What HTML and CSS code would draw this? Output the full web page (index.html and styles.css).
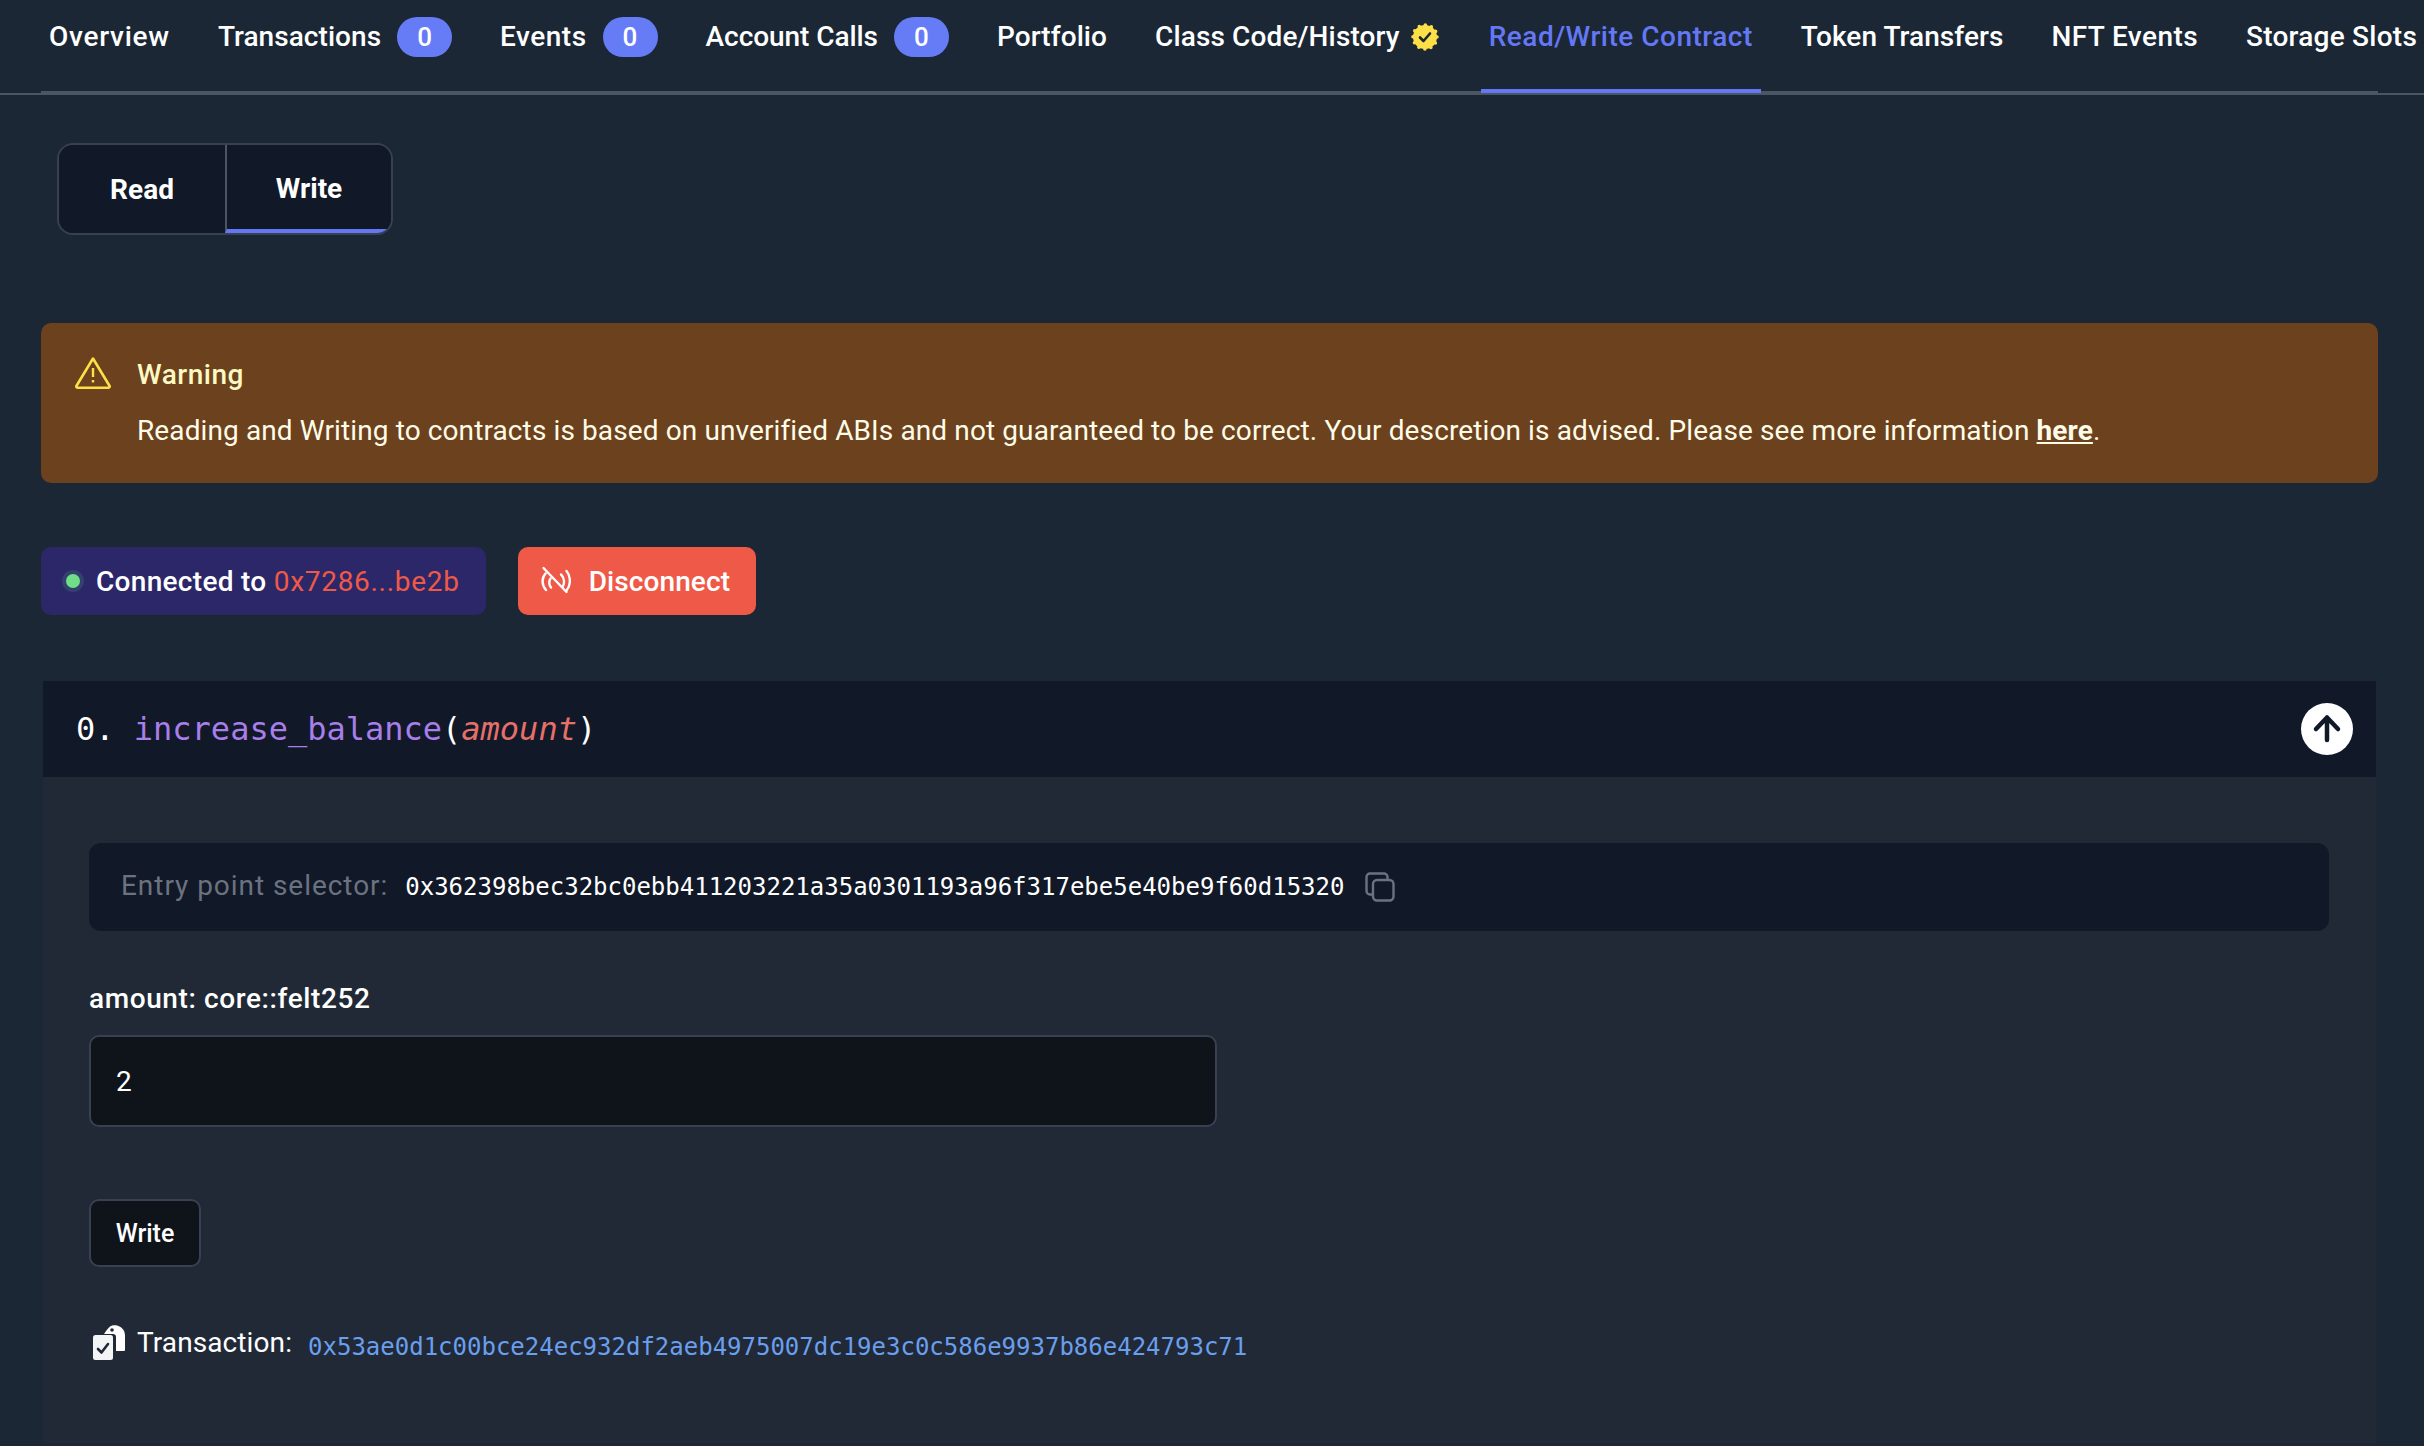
FILE: index.html
```html
<!DOCTYPE html>
<html lang="en">
<head>
  <meta charset="UTF-8">
  <title>Read/Write Contract</title>
  <link rel="stylesheet" href="styles.css">
</head>
<body>
  <nav class="tabs">
    <div class="tab-list">
      <a class="tab tab-overview">Overview</a>
      <a class="tab tab-tx">Transactions <span class="badge">0</span></a>
      <a class="tab tab-events">Events <span class="badge">0</span></a>
      <a class="tab tab-calls">Account Calls <span class="badge">0</span></a>
      <a class="tab tab-portfolio">Portfolio</a>
      <a class="tab tab-class">Class Code/History
        <svg class="verified" viewBox="0 0 28 28">
          <circle cx="14" cy="14" r="12" fill="#fde047" stroke="#fde047" stroke-width="3.600" stroke-linecap="round" stroke-dasharray="0 6.283"/>
          <path fill="none" stroke="#1b2735" stroke-width="2.600" stroke-linecap="round" stroke-linejoin="round" d="M9 14.500l3.500 3.500 6.500-7.500"/>
        </svg>
      </a>
      <a class="tab tab-rw active">Read/Write Contract</a>
      <a class="tab tab-token">Token Transfers</a>
      <a class="tab tab-nft">NFT Events</a>
      <a class="tab">Storage Slots</a>
    </div>
  </nav>

  <main class="content">
    <div class="segment">
      <button class="segment-btn">Read</button>
      <button class="segment-btn selected">Write</button>
    </div>

    <div class="warning">
      <svg class="warning-icon" viewBox="0 0 36 32">
        <path fill="none" stroke="#fde047" stroke-width="2.600" stroke-linejoin="round" d="M18 1.500L34.600 29a1.200 1.200 0 0 1-1 1.700H2.400a1.200 1.200 0 0 1-1-1.700z"/>
        <path stroke="#fde047" stroke-width="2.400" d="M18 11v9M18 23v2.600"/>
      </svg>
      <div>
        <div class="warning-title">Warning</div>
        <p class="warning-text">Reading and Writing to contracts is based on unverified ABIs and not guaranteed to be correct. Your descretion is advised. Please see more information <a class="warning-link">here</a>.</p>
      </div>
    </div>

    <div class="wallet">
      <div class="connected">
        <span class="dot"></span>
        <span>Connected to <span class="address">0x7286...be2b</span></span>
      </div>
      <button class="disconnect">
        <svg class="disconnect-icon" viewBox="0 0 30 30">
          <g fill="none" stroke="#fff" stroke-width="2.400" stroke-linecap="round">
            <path d="M4.500 7.500C.5 12 .5 19 5 24M25.500 5c4.500 5.500 4.500 14 0 19.500"/>
            <path d="M9.500 12.500C7.500 15 8 19 10 21.500M20 8.500c3.500 3 4 9 1.500 12.500"/>
            <path d="M2.500 2L25.500 26"/>
          </g>
        </svg>
        Disconnect
      </button>
    </div>

    <section class="fn-card">
      <header class="fn-header">
        <div class="fn-title">0. <span class="fn-name">increase_balance</span>(<em class="fn-arg">amount</em>)</div>
        <button class="collapse">
          <svg viewBox="0 0 52 52" class="collapse-icon">
            <path fill="none" stroke="#111827" stroke-width="4.500" stroke-linecap="round" stroke-linejoin="round" d="M26 37V14.500M15 26L26 14.500 37 26"/>
          </svg>
        </button>
      </header>
      <div class="fn-body">
        <div class="selector">
          <span class="selector-label">Entry point selector:</span>
          <code class="selector-value">0x362398bec32bc0ebb411203221a35a0301193a96f317ebe5e40be9f60d15320</code>
          <svg class="copy-icon" viewBox="0 0 30 30">
            <g fill="none" stroke="#6b7280" stroke-width="2.400">
              <path d="M7 22.500H5a3.500 3.500 0 0 1-3.500-3.500V5A3.500 3.500 0 0 1 5 1.500h14A3.500 3.500 0 0 1 22.500 5v2"/>
              <rect x="8" y="8" width="20.500" height="20.500" rx="4"/>
            </g>
          </svg>
        </div>
        <label class="field-label" for="amount">amount: core::felt252</label>
        <input class="field-input" id="amount" type="text" value="2">
        <button class="write-btn">Write</button>
        <div class="tx">
          <svg class="tx-icon" viewBox="0 0 32 35">
            <path fill="#fff" d="M11 9c2-3 4-6 6-7.500 2-1.500 5-1.500 7-1 4 1 8 4 8 10V25a1 1 0 0 1-1 1h-8V12a3 3 0 0 0-3-3z"/>
            <circle cx="19" cy="5" r="1.800" fill="#212936"/>
            <rect fill="#f3f4f6" x="0" y="10" width="20" height="25" rx="2.500"/>
            <path fill="none" stroke="#1f2937" stroke-width="2.600" stroke-linecap="round" stroke-linejoin="round" d="M5 24l3.500 3.500L15 19"/>
          </svg>
          <span class="tx-label">Transaction:</span>
          <a class="tx-hash">0x53ae0d1c00bce24ec932df2aeb4975007dc19e3c0c586e9937b86e424793c71</a>
        </div>
      </div>
    </section>
  </main>
</body>
</html>
```

FILE: styles.css
```css
html, body {
  height: 100%;
}
body {
  margin: 0;
  background-color: #1b2735;
  color: #fff;
  font-family: Roboto, "Noto Sans", Arial, sans-serif;
  font-size: 28px;
  overflow: hidden;
}
button {
  font-family: inherit;
  color: inherit;
}

/* tabs */
.tabs {
  border-bottom: 2px solid #4b5563;
}
.tab-list {
  display: flex;
  gap: 32px;
  height: 91px;
  margin: 0 46px 0 41px;
  border-bottom: 2px solid #4b5563;
}
.tab {
  display: flex;
  flex-shrink: 0;
  align-items: center;
  align-self: flex-start;
  gap: 16px;
  height: 40px;
  padding: 17px 8px 32px;
  border-bottom: 4px solid transparent;
  font-weight: 500;
  line-height: 40px;
  letter-spacing: 0.25px;
  white-space: nowrap;
}
.tab-overview { letter-spacing: 0.74px; }
.tab-tx { letter-spacing: 0.05px; }
.tab-events { letter-spacing: 0.5px; }
.tab-calls { letter-spacing: -0.07px; }
.tab-portfolio { letter-spacing: 0.08px; }
.tab-class { letter-spacing: 0.13px; }
.tab-rw { letter-spacing: 0.5px; }
.tab-token { letter-spacing: 0.06px; }
.tab-nft { letter-spacing: 0.41px; }
.tab.active {
  color: #6478f5;
  border-bottom-color: #6478f5;
}
.badge {
  display: inline-block;
  width: 55px;
  height: 40px;
  border-radius: 20px;
  background-color: #667cf7;
  font-size: 26px;
  text-align: center;
}
.verified {
  width: 28px;
  height: 28px;
  margin: 0 2px 0 -5px;
}

/* main */
.content {
  padding: 0 46px 0 41px;
}
.segment {
  display: flex;
  width: fit-content;
  height: 88px;
  margin: 48px 0 0 16px;
  border: 2px solid #374151;
  border-radius: 16px;
  overflow: hidden;
}
.segment-btn {
  width: 166px;
  border: 0;
  background-color: #111827;
  font-size: 28px;
  font-weight: 700;
}
.segment-btn.selected {
  padding-top: 4px;
  border-left: 2px solid #4b5563;
  border-bottom: 4px solid #6478f5;
}

/* warning */
.warning {
  display: flex;
  gap: 26px;
  height: 160px;
  margin-top: 88px;
  padding: 34px 34px 0;
  box-sizing: border-box;
  border-radius: 10px;
  background-color: #6c411d;
  color: #fefce8;
}
.warning-icon {
  width: 36px;
  height: 32px;
  flex-shrink: 0;
}
.warning-title {
  color: #fef9c3;
  font-weight: 500;
  line-height: 36px;
  letter-spacing: 0.5px;
}
.warning-text {
  margin: 20px 0 0;
  line-height: 36px;
  letter-spacing: 0.11px;
}
.warning-link {
  font-weight: 700;
  text-decoration: underline;
}

/* wallet */
.wallet {
  display: flex;
  gap: 32px;
  margin-top: 64px;
}
.connected {
  display: flex;
  align-items: center;
  gap: 16px;
  height: 68px;
  padding: 0 26px 0 25px;
  border-radius: 10px;
  background-color: #2c2768;
  font-weight: 500;
  letter-spacing: 0.3px;
}
.dot {
  width: 14px;
  height: 14px;
  border-radius: 50%;
  background-color: #6ee087;
  box-shadow: 0 0 0 4px #34406e;
}
.address {
  color: #ee5a47;
  font-weight: 400;
  letter-spacing: 0.7px;
}
.disconnect {
  display: flex;
  align-items: center;
  gap: 18px;
  height: 68px;
  padding: 0 26px 0 23px;
  border: 0;
  border-radius: 10px;
  background-color: #ee5a47;
  font-size: 28px;
  font-weight: 500;
  letter-spacing: 0.1px;
}
.disconnect-icon {
  width: 30px;
  height: 30px;
}

/* function card */
.fn-card {
  height: 762px;
  margin: 66px 2px 0;
  background-color: #212936;
}
.fn-header {
  display: flex;
  align-items: center;
  justify-content: space-between;
  height: 96px;
  padding: 0 23px 0 33px;
  background-color: #111827;
}
.fn-title {
  font-family: "DejaVu Sans Mono", monospace;
  font-size: 32px;
}
.fn-name {
  color: #a87ee8;
}
.fn-arg {
  color: #e5706a;
}
.collapse {
  width: 52px;
  height: 52px;
  padding: 0;
  border: 0;
  border-radius: 50%;
  background-color: #fff;
}
.collapse-icon {
  display: block;
}
.fn-body {
  padding: 66px 47px 0 46px;
}
.selector {
  display: flex;
  align-items: center;
  height: 88px;
  padding-left: 32px;
  border-radius: 12px;
  background-color: #111827;
}
.selector-label {
  margin-top: -3px;
  color: #6b7280;
  letter-spacing: 0.95px;
}
.selector-value {
  margin-left: 17px;
  font-family: "DejaVu Sans Mono", monospace;
  font-size: 24px;
}
.copy-icon {
  width: 30px;
  height: 30px;
  margin-left: 21px;
}
.field-label {
  display: block;
  margin-top: 48px;
  font-weight: 500;
  line-height: 40px;
  letter-spacing: 0.6px;
}
.field-input {
  display: block;
  width: 1128px;
  height: 92px;
  margin-top: 16px;
  padding: 0 25px;
  box-sizing: border-box;
  border: 2px solid #374151;
  border-radius: 10px;
  background-color: #0f131a;
  color: #fff;
  font-family: inherit;
  font-size: 28px;
}
.write-btn {
  display: block;
  width: 112px;
  height: 68px;
  margin-top: 72px;
  padding: 0;
  border: 2px solid #374151;
  border-radius: 10px;
  background-color: #0f131a;
  font-size: 25px;
  font-weight: 500;
}
.tx {
  display: flex;
  align-items: flex-start;
  height: 35px;
  margin-top: 58px;
}
.tx-icon {
  width: 32px;
  height: 35px;
  margin-left: 4px;
}
.tx-label {
  margin-left: 12px;
  line-height: 36px;
  letter-spacing: 0.1px;
}
.tx-hash {
  margin-left: 16px;
  color: #6a9fee;
  font-family: "DejaVu Sans Mono", monospace;
  font-size: 24px;
  line-height: 44px;
}
```
